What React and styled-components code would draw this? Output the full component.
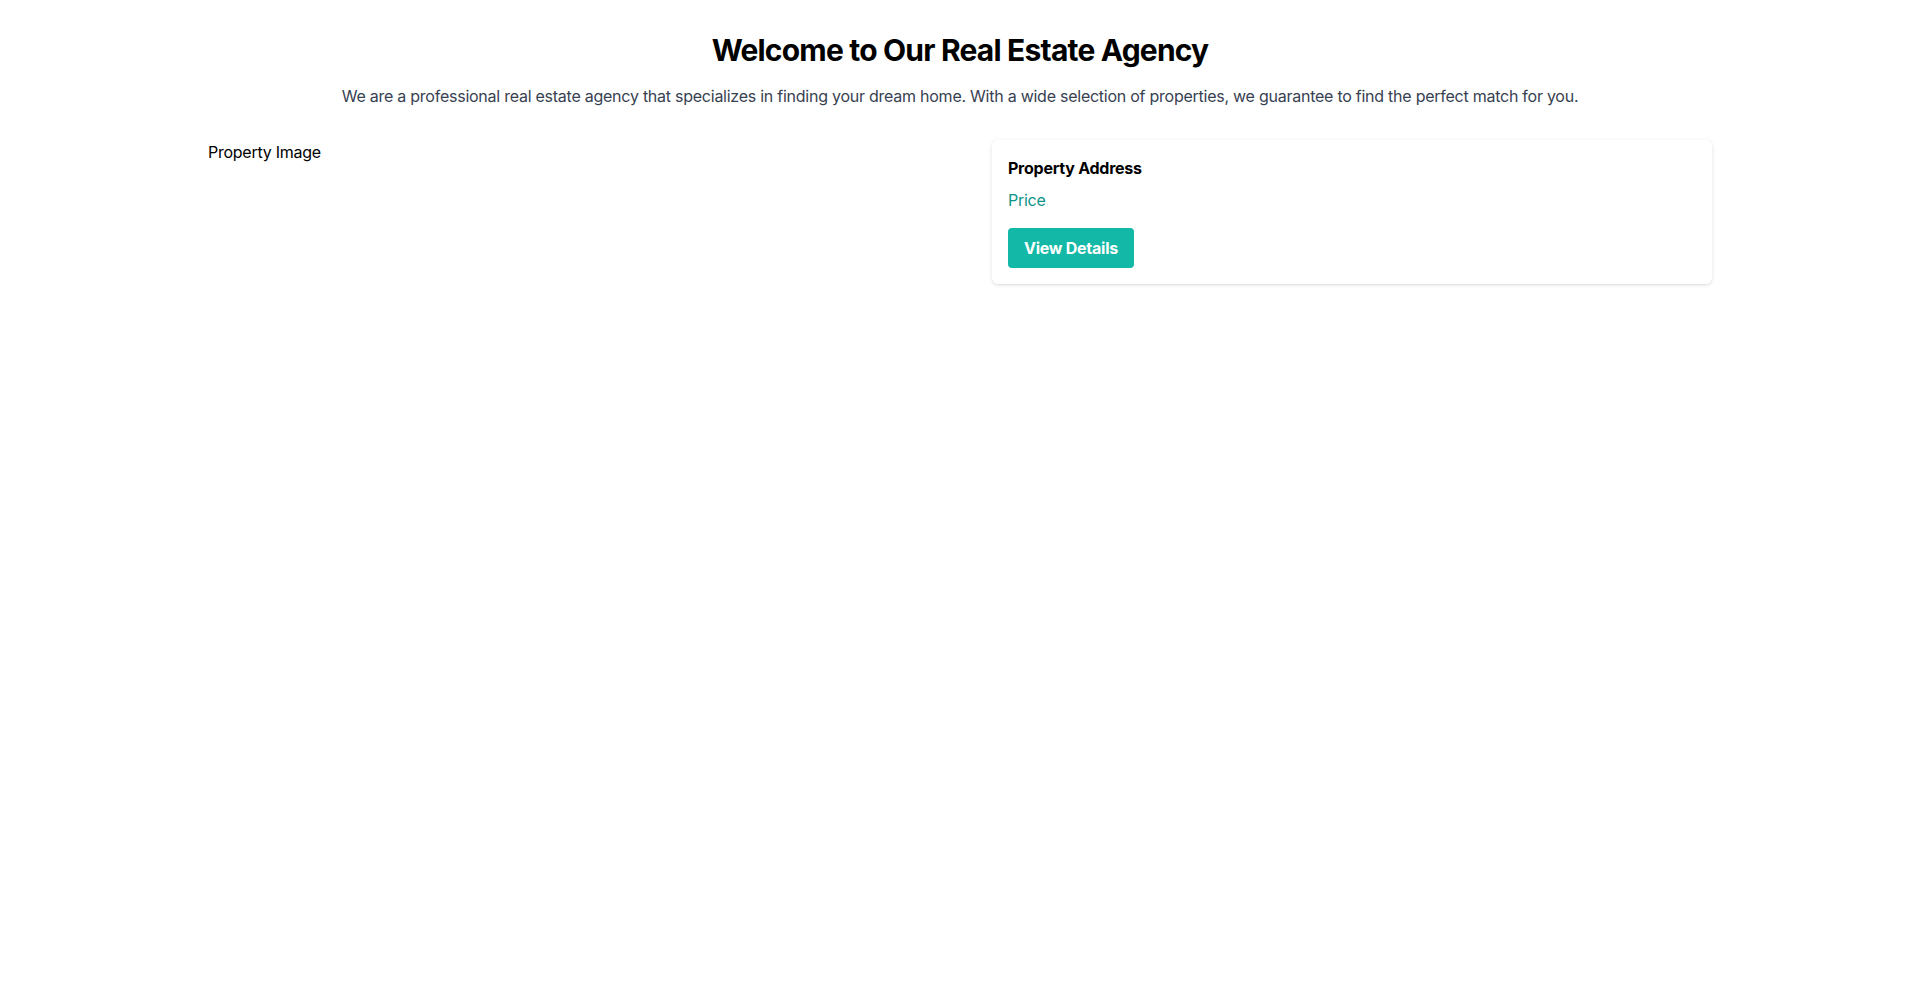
import styled, { createGlobalStyle } from "styled-components"

const GlobalStyle = createGlobalStyle`
  * {
    box-sizing: border-box;
  }
  body {
    margin: 0;
    background: #ffffff;
    font-family: Inter, "Noto Sans", "Liberation Sans", sans-serif;
    letter-spacing: -0.25px;
    color: #000000;
  }
`

const Page = styled.main`
  max-width: 1536px;
  margin: 0 auto;
  padding: 32px 16px;
`

const Heading = styled.h1`
  margin: 0 0 16px;
  font-size: 30px;
  line-height: 36px;
  font-weight: 700;
  text-align: center;
  letter-spacing: -0.8px;
`

const Intro = styled.p`
  margin: 0 0 32px;
  font-size: 16px;
  line-height: 24px;
  color: #374151;
  text-align: center;
`

const Listing = styled.section`
  display: grid;
  grid-template-columns: 1fr 1fr;
  gap: 64px;
  align-items: start;
`

const ImageSlot = styled.div`
  font-size: 16px;
  line-height: 24px;
`

const Card = styled.div`
  background: #ffffff;
  border-radius: 6px;
  padding: 16px;
  box-shadow: 0 1px 4px rgba(0, 0, 0, 0.1), 0 1px 2px rgba(0, 0, 0, 0.06);
`

const Address = styled.h2`
  margin: 0 0 8px;
  font-size: 16px;
  line-height: 24px;
  font-weight: 700;
`

const Price = styled.p`
  margin: 0 0 16px;
  font-size: 16px;
  line-height: 24px;
  color: #0d9488;
`

const Button = styled.button`
  border: none;
  border-radius: 4px;
  padding: 8px 16px;
  background: #14b8a6;
  color: #ffffff;
  font-family: inherit;
  font-size: 16px;
  line-height: 24px;
  font-weight: 700;
  letter-spacing: inherit;
  cursor: pointer;
`

export default function App() {
  return (
    <>
      <GlobalStyle />
      <Page>
        <Heading>Welcome to Our Real Estate Agency</Heading>
        <Intro>
          We are a professional real estate agency that specializes in finding
          your dream home. With a wide selection of properties, we guarantee to
          find the perfect match for you.
        </Intro>
        <Listing>
          <ImageSlot>Property Image</ImageSlot>
          <Card>
            <Address>Property Address</Address>
            <Price>Price</Price>
            <Button>View Details</Button>
          </Card>
        </Listing>
      </Page>
    </>
  )
}
